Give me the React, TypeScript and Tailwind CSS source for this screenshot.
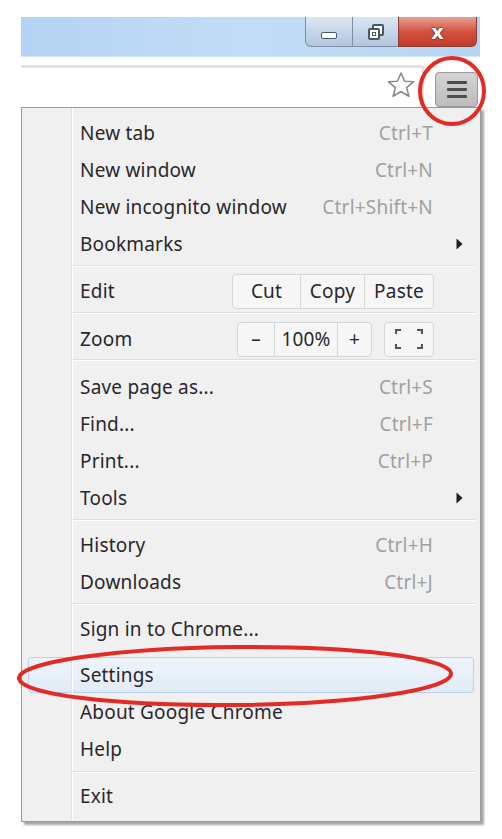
import React from "react";

const font = { fontFamily: '"Noto Sans", "Open Sans", Arial, sans-serif', letterSpacing: "0.2px" };

function Item({ label, shortcut, arrow }: { label: string; shortcut?: string; arrow?: boolean }) {
  return (
    <div className="flex h-[37px] items-center pt-[1px] pl-[58px] pr-[47px] relative">
      <span className="text-[19px] text-[#2a262c] flex-1">{label}</span>
      {shortcut && <span className="text-[19px] text-[#a0a0a0]">{shortcut}</span>}
      {arrow && (
        <svg className="absolute left-[433px] top-[12px]" width="9" height="14" viewBox="0 0 9 14">
          <path d="M1.5 1.5 L7.5 7 L1.5 12.5 Z" fill="#1e1e1e" />
        </svg>
      )}
    </div>
  );
}

function Sep() {
  return <div className="ml-[50px] mr-[5px] h-[2px] border-t border-[#dedede] border-b-white" style={{ borderBottomWidth: 1 }} />;
}

export default function App() {
  return (
    <div className="relative w-[502px] h-[839px] bg-white overflow-hidden" style={font}>
      <div className="pt-[17px]">
        {/* title bar */}
        <div className="ml-[21px] w-[459px] h-[40px] bg-gradient-to-r from-[#b4d3f2] via-[#c2ddf7] to-[#b6d4f2] flex justify-end border-b border-[#d6e6f5]">
          <div className="mr-[3px] flex h-[30px]">
            <div className="w-[48px] h-full rounded-bl-[6px] border border-t-0 border-[#7d8da3] bg-gradient-to-b from-[#dbe6f3] to-[#b2c6dd] flex items-center justify-center">
              <div className="w-[16px] h-[7px] bg-white border-[1.5px] border-[#4a5566] rounded-[2px] mt-[8px]" />
            </div>
            <div className="w-[45px] h-full border-b border-[#7d8da3] bg-gradient-to-b from-[#dbe6f3] to-[#b2c6dd] flex items-center justify-center">
              <div className="relative w-[16px] h-[16px]">
                <div className="absolute left-[4px] top-0 w-[12px] h-[12px] border-[2px] border-[#4a5566] bg-white rounded-[2px]" />
                <div className="absolute left-0 top-[4px] w-[12px] h-[12px] border-[2px] border-[#4a5566] bg-white rounded-[2px] flex items-center justify-center">
                  <div className="w-[4px] h-[4px] border border-[#4a5566]" />
                </div>
              </div>
            </div>
            <div className="w-[79px] h-full rounded-br-[6px] border border-t-0 border-[#8a3a32] bg-gradient-to-b from-[#e8a093] via-[#d4523f] to-[#c43a2a] flex items-center justify-center">
              <span className="text-white font-bold text-[20px] leading-none" style={{ fontFamily: '"DejaVu Sans", sans-serif', textShadow: "0 0 2px #4a1a14, 0 0 1px #4a1a14" }}>x</span>
            </div>
          </div>
        </div>
        {/* toolbar */}
        <div className="h-[50px] flex">
          <div className="ml-[21px] w-[403px] mt-[8px] h-[36px] border-t-[3px] border-r-[2px] border-[#e2e2e2] rounded-tr-[3px] flex justify-end items-center pr-[6px]">
            <svg width="30" height="28" viewBox="0 0 30 28">
              <path d="M15 2 L18.6 10.3 L27.5 10.8 L20.6 16.6 L22.9 25.3 L15 20.5 L7.1 25.3 L9.4 16.6 L2.5 10.8 L11.4 10.3 Z" fill="white" stroke="#8a8a8a" strokeWidth="1.6" strokeLinejoin="round" />
            </svg>
          </div>
          <div className="ml-[11px] mt-[15px] w-[43px] h-[35px] rounded-[4px] border border-[#9a9a9a] bg-gradient-to-b from-[#d4d4d4] to-[#bcbcbc] flex flex-col items-center justify-center gap-[4px]">
            <div className="w-[20px] h-[3px] bg-[#4d4d4d] rounded-[1px]" />
            <div className="w-[20px] h-[3px] bg-[#4d4d4d] rounded-[1px]" />
            <div className="w-[20px] h-[3px] bg-[#4d4d4d] rounded-[1px]" />
          </div>
        </div>
        {/* menu */}
        <div className="relative ml-[21px] w-[460px] bg-[#f0f0f0] border border-[#9a9a9a] shadow-[3px_3px_2px_rgba(0,0,0,0.35)] pt-[6px] pb-[7px]">
          <div className="absolute left-[49px] top-0 bottom-0 w-[2px] border-l border-[#e2e2e2] border-r border-r-white" />
          <Item label="New tab" shortcut="Ctrl+T" />
          <Item label="New window" shortcut="Ctrl+N" />
          <Item label="New incognito window" shortcut="Ctrl+Shift+N" />
          <Item label="Bookmarks" arrow />
          <div className="h-[3px]" />
          <Sep />
          <div className="flex h-[45px] items-center pt-[3px] pl-[58px] pr-[46px] relative">
            <span className="text-[19px] text-[#2a262c] flex-1">Edit</span>
            <div className="flex h-[35px] border border-[#d6d6d6] rounded-[4px] bg-[#f6f6f6] text-[19px] text-[#2a262c]">
              <div className="w-[68px] flex items-center justify-center border-r border-[#d6d6d6]">Cut</div>
              <div className="w-[64px] flex items-center justify-center border-r border-[#d6d6d6]">Copy</div>
              <div className="w-[68px] flex items-center justify-center">Paste</div>
            </div>
          </div>
          <Sep />
          <div className="flex h-[45px] items-center pt-[5px] pl-[58px] pr-[46px] relative">
            <span className="text-[19px] text-[#2a262c] flex-1">Zoom</span>
            <div className="flex h-[35px] border border-[#d6d6d6] rounded-[4px] bg-[#f6f6f6] text-[19px] text-[#2a262c]">
              <div className="w-[37px] flex items-center justify-center border-r border-[#d6d6d6]">–</div>
              <div className="w-[63px] flex items-center justify-center border-r border-[#d6d6d6]">100%</div>
              <div className="w-[33px] flex items-center justify-center">+</div>
            </div>
            <div className="ml-[12px] w-[50px] h-[35px] border border-[#d6d6d6] rounded-[4px] bg-[#f6f6f6] flex items-center justify-center">
              <svg width="30" height="22" viewBox="0 0 30 22">
                <path d="M2 6 V2 H7 M23 2 H28 V6 M28 16 V20 H23 M7 20 H2 V16" fill="none" stroke="#555" strokeWidth="2" />
              </svg>
            </div>
          </div>
          <Sep />
          <div className="h-[7px]" />
          <Item label="Save page as..." shortcut="Ctrl+S" />
          <Item label="Find..." shortcut="Ctrl+F" />
          <Item label="Print..." shortcut="Ctrl+P" />
          <Item label="Tools" arrow />
          <div className="h-[3px]" />
          <Sep />
          <div className="h-[5px]" />
          <Item label="History" shortcut="Ctrl+H" />
          <Item label="Downloads" shortcut="Ctrl+J" />
          <div className="h-[3px]" />
          <Sep />
          <div className="h-[5px]" />
          <Item label="Sign in to Chrome..." />
          <div className="h-[10px]" />
          <div className="mx-[6px] h-[36px] rounded-[3px] border border-[#b8d3f0] bg-gradient-to-b from-[#eef4fb] to-[#e1ebf7] flex items-center pt-[1px] pl-[51px]">
            <span className="text-[19px] text-[#2a262c]">Settings</span>
          </div>
          <Item label="About Google Chrome" />
          <Item label="Help" />
          <div className="h-[4px]" />
          <Sep />
          <div className="h-[4px]" />
          <Item label="Exit" />
        </div>
      </div>
      {/* red annotations */}
      <svg className="absolute left-0 top-0 pointer-events-none" width="502" height="839">
        <ellipse cx="452" cy="91" rx="32" ry="33" fill="none" stroke="#e32b24" strokeWidth="4" />
        <ellipse cx="235" cy="676" rx="216" ry="29" fill="none" stroke="#e32b24" strokeWidth="4" transform="rotate(-0.6 235 676)" />
      </svg>
    </div>
  );
}
